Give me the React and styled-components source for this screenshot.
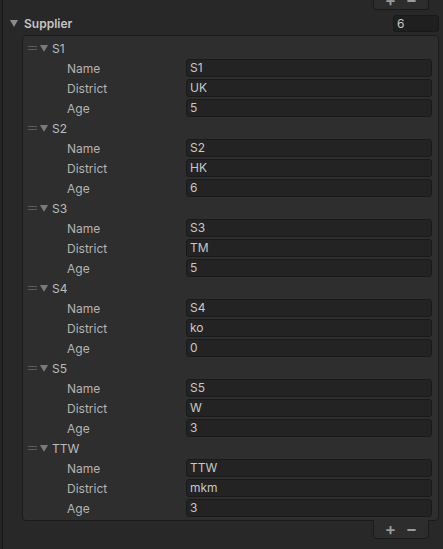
import React from "react";
import styled, { createGlobalStyle } from "styled-components";

const GlobalStyle = createGlobalStyle`
	html, body {
		margin: 0;
		padding: 0;
		background: #282828;
	}
	body {
		font-family: Inter, "Noto Sans", "Liberation Sans", sans-serif;
		font-size: 12px;
		color: #b8b8b8;
	}
`;

const Page = styled.div`
	width: 443px;
	height: 549px;
	overflow: hidden;
	box-sizing: border-box;
	border-left: 2px solid #242424;
	position: relative;
	&::before {
		content: "";
		position: absolute;
		left: 0;
		top: 0;
		bottom: 0;
		width: 1px;
		background: #161616;
	}
`;

const Inner = styled.div`
	display: flex;
	flex-direction: column;
	padding-right: 4px;
`;

const FooterRow = styled.div`
	display: flex;
	justify-content: flex-end;
	padding-right: ${p => p.$right}px;
	margin-top: ${p => p.$top || 0}px;
`;

const FooterBox = styled.div`
	width: 56px;
	height: 19px;
	box-sizing: border-box;
	background: #2d2d2d;
	border: 1px solid #1b1b1b;
	border-top: none;
	border-radius: 0 0 4px 4px;
	display: flex;
	align-items: center;
	justify-content: space-around;
	padding: 0 6px;
	color: #9a9a9a;
	font-size: 17px;
	font-weight: 600;
	line-height: 1;
`;

const HeaderRow = styled.div`
	display: flex;
	align-items: center;
	height: 18px;
	margin-top: 4px;
	padding-left: 8px;
`;

const Arrow = styled.span`
	width: 0;
	height: 0;
	border-left: 4px solid transparent;
	border-right: 4px solid transparent;
	border-top: 7px solid ${p => p.$color || "#8c8c8c"};
	margin-right: ${p => p.$gap}px;
`;

const HeaderLabel = styled.span`
	flex: 1;
	color: #c4c4c4;
	font-weight: 600;
`;

const CountField = styled.div`
	width: 46px;
	height: 17px;
	box-sizing: border-box;
	background: #1f1f1f;
	border: 1px solid #191919;
	border-radius: 3px;
	padding-left: 3px;
	line-height: 15px;
	color: #c8c8c8;
`;

const ListBox = styled.div`
	margin: 3px 0 0 20px;
	height: 486px;
	box-sizing: border-box;
	background: #2e2e2e;
	border: 1px solid #1b1b1b;
	border-radius: 4px;
	padding-top: 2px;
	display: flex;
	flex-direction: column;
`;

const ElementHead = styled.div`
	display: flex;
	align-items: center;
	height: 20px;
	padding-left: 5px;
`;

const Handle = styled.span`
	width: 9px;
	height: 4px;
	border-top: 1px solid #5c5c5c;
	border-bottom: 1px solid #5c5c5c;
	margin-right: 3px;
	box-sizing: border-box;
`;

const ElementName = styled.span`
	color: #bcbcbc;
`;

const FieldRow = styled.div`
	display: grid;
	grid-template-columns: 119px 1fr;
	align-items: center;
	height: 20px;
	padding: 0 6px 0 44px;
`;

const Label = styled.span`
	color: #b4b4b4;
`;

const Field = styled.div`
	height: 18px;
	box-sizing: border-box;
	background: #232323;
	border: 1px solid #1a1a1a;
	border-radius: 3px;
	padding-left: 3px;
	line-height: 16px;
	color: #c8c8c8;
`;

const suppliers = [
	{ name: "S1", district: "UK", age: 5 },
	{ name: "S2", district: "HK", age: 6 },
	{ name: "S3", district: "TM", age: 5 },
	{ name: "S4", district: "ko", age: 0 },
	{ name: "S5", district: "W", age: 3 },
	{ name: "TTW", district: "mkm", age: 3 },
];

const Element = ({ item }) => (
	<>
		<ElementHead>
			<Handle />
			<Arrow $gap={4} $color="#7a7a7a" />
			<ElementName>{item.name}</ElementName>
		</ElementHead>
		{[
			["Name", item.name],
			["District", item.district],
			["Age", item.age],
		].map(([label, value]) => (
			<FieldRow key={label}>
				<Label>{label}</Label>
				<Field>{value}</Field>
			</FieldRow>
		))}
	</>
);

export default function App() {
	return (
		<>
			<GlobalStyle />
			<Page>
				<Inner>
					<FooterRow $right={10} $top={-9}>
						<FooterBox>
							<span>+</span>
							<span>−</span>
						</FooterBox>
					</FooterRow>
					<HeaderRow>
						<Arrow $gap={6} />
						<HeaderLabel>Supplier</HeaderLabel>
						<CountField>6</CountField>
					</HeaderRow>
					<ListBox>
						{suppliers.map(s => (
							<Element key={s.name} item={s} />
						))}
					</ListBox>
					<FooterRow $right={10} $top={-1}>
						<FooterBox>
							<span>+</span>
							<span>−</span>
						</FooterBox>
					</FooterRow>
				</Inner>
			</Page>
		</>
	);
}
